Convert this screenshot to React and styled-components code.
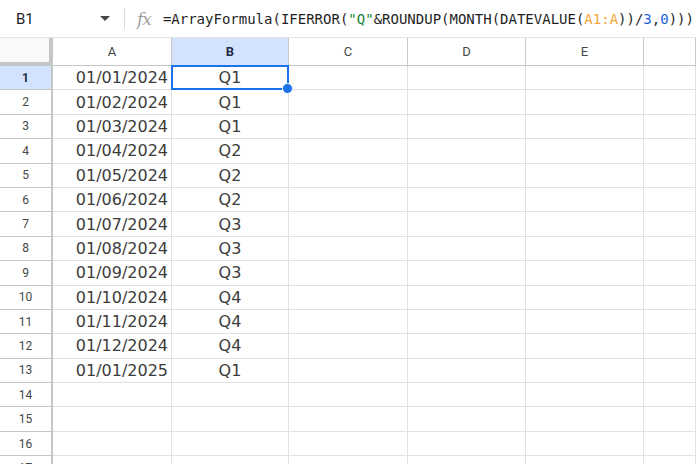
import React from 'react';
import styled, { createGlobalStyle } from 'styled-components';

const GlobalStyle = createGlobalStyle`
  html, body {
    margin: 0;
    padding: 0;
    background: #ffffff;
    overflow: hidden;
  }
  body {
    font-family: 'DejaVu Sans', sans-serif;
  }
`;

const COLS = ['A', 'B', 'C', 'D', 'E', ''];
const DATA = [
  ['01/01/2024', 'Q1'],
  ['01/02/2024', 'Q1'],
  ['01/03/2024', 'Q1'],
  ['01/04/2024', 'Q2'],
  ['01/05/2024', 'Q2'],
  ['01/06/2024', 'Q2'],
  ['01/07/2024', 'Q3'],
  ['01/08/2024', 'Q3'],
  ['01/09/2024', 'Q3'],
  ['01/10/2024', 'Q4'],
  ['01/11/2024', 'Q4'],
  ['01/12/2024', 'Q4'],
  ['01/01/2025', 'Q1'],
];
const ROW_COUNT = 17;

const SPage = styled.div`
  width: 696px;
  height: 464px;
  display: flex;
  flex-direction: column;
  overflow: hidden;
`;

const SFormulaBar = styled.div`
  height: 37px;
  border-bottom: 1px solid #e3e3e3;
  display: flex;
  align-items: center;
  flex-shrink: 0;
`;

const SNameBox = styled.div`
  width: 124px;
  padding: 0 14px 0 16px;
  box-sizing: border-box;
  display: flex;
  align-items: center;
  justify-content: space-between;
  font-family: Roboto, 'Liberation Sans', sans-serif;
  font-size: 15px;
  color: #1f1f1f;
`;

const SCaret = styled.span`
  width: 0;
  height: 0;
  border-left: 5px solid transparent;
  border-right: 5px solid transparent;
  border-top: 5px solid #444746;
`;

const SDivider = styled.div`
  width: 1px;
  height: 21px;
  background: #dadce0;
  margin-right: 12px;
`;

const SFx = styled.span`
  font-family: 'DejaVu Serif', serif;
  font-style: italic;
  font-size: 17px;
  color: #a0a0a0;
  margin-right: 12px;
  letter-spacing: -1px;
`;

const SFormula = styled.div`
  font-family: 'DejaVu Sans Mono', monospace;
  font-size: 14px;
  color: #1f1f1f;
  white-space: nowrap;
`;

const SToken = styled.span`
  color: ${(p) => p.$color};
`;

const SGrid = styled.div`
  display: grid;
  grid-template-columns: 53px 119px 117px 119px 118px 118px 1fr;
  grid-template-rows: 28px repeat(${ROW_COUNT}, 24.4px);
`;

const SCorner = styled.div`
  background: #f8f9fa;
  border-right: 4px solid #c4c7c5;
  border-bottom: 4px solid #c4c7c5;
  box-sizing: border-box;
`;

const SColHeader = styled.div`
  display: flex;
  align-items: center;
  justify-content: center;
  font-family: Roboto, 'Liberation Sans', sans-serif;
  font-size: 13px;
  color: ${(p) => (p.$active ? '#1f2a44' : '#444746')};
  font-weight: ${(p) => (p.$active ? 700 : 400)};
  background: ${(p) => (p.$active ? '#d3e3fd' : '#ffffff')};
  border-right: 1px solid #c4c7c5;
  border-bottom: 1px solid #c4c7c5;
  box-sizing: border-box;
`;

const SRowHeader = styled.div`
  display: flex;
  align-items: center;
  justify-content: center;
  font-family: Roboto, 'Liberation Sans', sans-serif;
  font-size: 12px;
  color: ${(p) => (p.$active ? '#1f2a44' : '#444746')};
  font-weight: ${(p) => (p.$active ? 700 : 400)};
  background: ${(p) => (p.$active ? '#d3e3fd' : '#ffffff')};
  border-right: 2px solid #c4c7c5;
  border-bottom: 1px solid #c4c7c5;
  box-sizing: border-box;
`;

const SCell = styled.div`
  position: relative;
  display: flex;
  align-items: center;
  justify-content: ${(p) => p.$align || 'flex-start'};
  padding: 0 3px;
  font-family: 'DejaVu Sans', sans-serif;
  font-size: 16px;
  color: #3c3c3c;
  border-right: 1px solid #e1e1e1;
  border-bottom: 1px solid #e1e1e1;
  box-sizing: border-box;
  white-space: nowrap;
`;

const SSelection = styled.div`
  position: absolute;
  left: -1px;
  top: -1px;
  right: -1px;
  bottom: -1px;
  border: 2px solid #1a73e8;
  pointer-events: none;
`;

const SHandle = styled.div`
  position: absolute;
  right: -6px;
  bottom: -6px;
  width: 9px;
  height: 9px;
  border-radius: 50%;
  background: #1a73e8;
  border: 1px solid #ffffff;
  z-index: 2;
`;

const Formula = () => (
  <SFormula>
    =ArrayFormula(IFERROR(<SToken $color="#188038">"Q"</SToken>&amp;ROUNDUP(MONTH(DATEVALUE(
    <SToken $color="#f4a53a">A1:A</SToken>))/<SToken $color="#1a5fd6">3</SToken>,
    <SToken $color="#1a5fd6">0</SToken>)))
  </SFormula>
);

const App = () => {
  const rows = Array.from({ length: ROW_COUNT }, (_, i) => i + 1);

  return (
    <SPage>
      <GlobalStyle />
      <SFormulaBar>
        <SNameBox>
          B1
          <SCaret />
        </SNameBox>
        <SDivider />
        <SFx>fx</SFx>
        <Formula />
      </SFormulaBar>
      <SGrid>
        <SCorner />
        {COLS.map((c) => (
          <SColHeader key={c || 'F'} $active={c === 'B'}>
            {c}
          </SColHeader>
        ))}
        {rows.map((r) => {
          const data = DATA[r - 1] || ['', ''];
          return (
            <React.Fragment key={r}>
              <SRowHeader $active={r === 1}>{r}</SRowHeader>
              <SCell $align="flex-end">{data[0]}</SCell>
              <SCell $align="center">
                {data[1]}
                {r === 1 && (
                  <SSelection>
                    <SHandle />
                  </SSelection>
                )}
              </SCell>
              <SCell />
              <SCell />
              <SCell />
              <SCell />
            </React.Fragment>
          );
        })}
      </SGrid>
    </SPage>
  );
};

export default App;
